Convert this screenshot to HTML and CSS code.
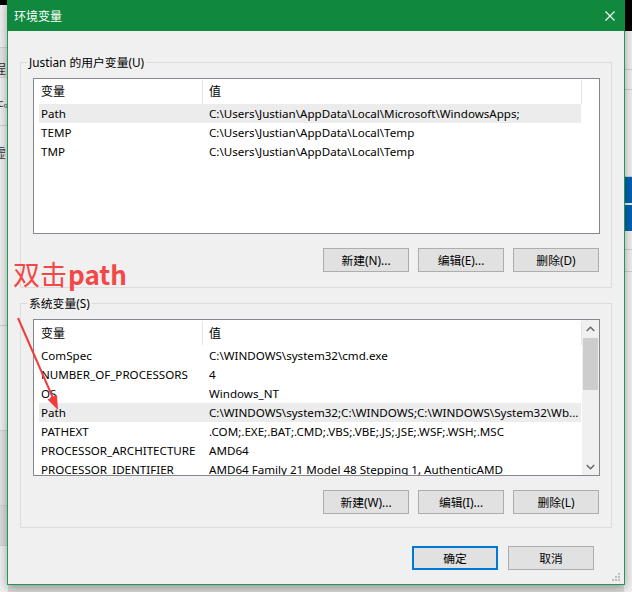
FILE: index.html
```html
<!DOCTYPE html>
<html lang="zh-CN">
<head>
<meta charset="utf-8">
<title>环境变量</title>
<link rel="stylesheet" href="styles.css">
</head>
<body>
<div class="bg-left">
  <div class="bl-top"></div>
  <div class="bl-row bl-r1"></div>
  <div class="bl-row bl-r2"><span class="frag f1">程</span></div>
  <div class="bl-row bl-r3"><span class="frag f2">c。</span></div>
  <div class="bl-row bl-r4"><span class="frag f3">虚</span></div>
  <div class="bl-row bl-r5"></div>
  <div class="bl-row bl-r6"></div>
  <div class="bl-row bl-r7"></div>
</div>
<div class="bg-right">
  <div class="br-top"></div>
  <div class="br-row br-r1"></div>
  <div class="br-row br-r2"></div>
  <div class="br-row br-r3"></div>
  <div class="br-blue"></div>
  <div class="br-blue second"></div>
  <div class="br-row br-r4"></div>
  <div class="br-row br-r5"></div>
</div>

<div class="dialog">
  <div class="titlebar">
    <span class="title">环境变量</span>
    <svg class="close" width="10" height="10" viewBox="0 0 10 10"><path d="M0.5 0.5 L9.5 9.5 M9.5 0.5 L0.5 9.5" stroke="#fff" stroke-width="1.1" fill="none"/></svg>
  </div>
  <div class="content">
    <fieldset class="group">
      <legend>Justian 的用户变量(U)</legend>
      <div class="listbox">
        <div class="list-main">
          <div class="lv-header"><div class="hc hc1">变量</div><div class="hc hc2">值</div></div>
          <div class="lv-row sel"><div class="c1">Path</div><div class="c2">C:\Users\Justian\AppData\Local\Microsoft\WindowsApps;</div></div>
          <div class="lv-row"><div class="c1">TEMP</div><div class="c2">C:\Users\Justian\AppData\Local\Temp</div></div>
          <div class="lv-row"><div class="c1">TMP</div><div class="c2">C:\Users\Justian\AppData\Local\Temp</div></div>
        </div>
      </div>
      <div class="btn-row">
        <button class="btn">新建(N)...</button>
        <button class="btn">编辑(E)...</button>
        <button class="btn">删除(D)</button>
      </div>
    </fieldset>

    <fieldset class="group sys">
      <legend>系统变量(S)</legend>
      <div class="listbox tall">
        <div class="list-main">
          <div class="lv-header"><div class="hc hc1">变量</div><div class="hc hc2">值</div></div>
          <div class="lv-row"><div class="c1">ComSpec</div><div class="c2">C:\WINDOWS\system32\cmd.exe</div></div>
          <div class="lv-row"><div class="c1">NUMBER_OF_PROCESSORS</div><div class="c2">4</div></div>
          <div class="lv-row"><div class="c1">OS</div><div class="c2">Windows_NT</div></div>
          <div class="lv-row sel"><div class="c1">Path</div><div class="c2">C:\WINDOWS\system32;C:\WINDOWS;C:\WINDOWS\System32\Wb...</div></div>
          <div class="lv-row"><div class="c1">PATHEXT</div><div class="c2">.COM;.EXE;.BAT;.CMD;.VBS;.VBE;.JS;.JSE;.WSF;.WSH;.MSC</div></div>
          <div class="lv-row"><div class="c1">PROCESSOR_ARCHITECTURE</div><div class="c2">AMD64</div></div>
          <div class="lv-row"><div class="c1">PROCESSOR_IDENTIFIER</div><div class="c2">AMD64 Family 21 Model 48 Stepping 1, AuthenticAMD</div></div>
        </div>
        <div class="scrollbar">
          <div class="sb-btn"><svg width="9" height="6" viewBox="0 0 9 6"><path d="M0.7 5 L4.5 1.2 L8.3 5" stroke="#606060" stroke-width="1.3" fill="none"/></svg></div>
          <div class="sb-track"><div class="sb-thumb"></div></div>
          <div class="sb-btn"><svg width="9" height="6" viewBox="0 0 9 6"><path d="M0.7 1 L4.5 4.8 L8.3 1" stroke="#606060" stroke-width="1.3" fill="none"/></svg></div>
        </div>
      </div>
      <div class="btn-row">
        <button class="btn">新建(W)...</button>
        <button class="btn">编辑(I)...</button>
        <button class="btn">删除(L)</button>
      </div>
    </fieldset>

    <div class="dlg-buttons">
      <button class="btn default">确定</button>
      <button class="btn">取消</button>
    </div>
  </div>
  <svg class="grip" width="9" height="9" viewBox="0 0 9 9">
    <rect x="6" y="0" width="2" height="2" fill="#bdbdbd"/>
    <rect x="3" y="3" width="2" height="2" fill="#bdbdbd"/>
    <rect x="6" y="3" width="2" height="2" fill="#bdbdbd"/>
    <rect x="0" y="6" width="2" height="2" fill="#bdbdbd"/>
    <rect x="3" y="6" width="2" height="2" fill="#bdbdbd"/>
    <rect x="6" y="6" width="2" height="2" fill="#bdbdbd"/>
  </svg>
</div>

<div class="annot">双击<span class="annot-en">path</span></div>
<svg class="arrow" width="632" height="592" viewBox="0 0 632 592">
  <line x1="18" y1="318" x2="53" y2="398" stroke="#f03c3c" stroke-width="2"/>
  <polygon points="58,410 47.5,399.5 57,395" fill="#f03c3c"/>
</svg>
</body>
</html>
```

FILE: styles.css
```css
* { box-sizing: border-box; }
html, body { margin: 0; padding: 0; }
body {
  width: 632px;
  height: 592px;
  position: relative;
  overflow: hidden;
  background: #d9d9d9;
  font-family: "Noto Sans", "Noto Sans CJK SC", sans-serif;
  font-size: 12px;
  color: #000;
}

/* background windows */
.bg-left {
  position: absolute;
  left: 0; top: 0;
  width: 8px; height: 592px;
  background: #f0f0f0;
  display: flex;
  flex-direction: column;
  overflow: hidden;
}
.bl-top { height: 5px; background: #000; }
.bl-row { border-bottom: 1px solid #d2d2d2; position: relative; overflow: hidden; }
.bl-r1 { height: 43px; background: #f0f0f0; }
.bl-r2 { height: 30px; background: #e6e6e6; }
.bl-r3 { height: 48px; }
.bl-r4 { height: 200px; }
.bl-r5 { height: 105px; }
.bl-r6 { height: 75px; background: #e2e2e2; }
.bl-r7 { height: 40px; background: #dcdcdc; }
.frag {
  display: block;
  margin-left: -7px;
  font-family: "Noto Sans CJK SC", sans-serif;
  font-size: 13px;
  line-height: 16px;
  color: #333;
}
.frag.f1 { margin-top: 12px; }
.frag.f2 { margin-top: 16px; margin-left: -2px; font-size: 11px; }
.frag.f3 { margin-top: 18px; }

.bg-right {
  position: absolute;
  left: 624px; top: 0;
  width: 8px; height: 592px;
  background: #f0f0f0;
  display: flex;
  flex-direction: column;
}
.br-top { height: 31px; background: #000; }
.br-row { border-bottom: 1px solid #d0d0d0; }
.br-r1 { height: 39px; }
.br-r2 { height: 20px; }
.br-r3 { height: 87px; }
.br-blue { height: 26px; background: #0063b1; }
.br-blue.second { margin-top: 2px; }
.br-r4 { height: 19px; }
.br-r5 { height: 22px; }

/* dialog window */
.dialog {
  position: absolute;
  left: 7px; top: 0;
  width: 618px;
  height: 585px;
  background: #f0f0f0;
  border: 1px solid #1d9a4f;
  border-top: none;
  box-shadow: 0 2px 10px rgba(0, 0, 0, 0.35);
  display: flex;
  flex-direction: column;
}
.titlebar {
  height: 31px;
  margin: 0 -1px;
  background: #10893e;
  color: #fff;
  display: flex;
  align-items: center;
  justify-content: space-between;
  padding: 0 10px 0 7px;
  flex: none;
}
.title {
  font-family: "Noto Sans CJK SC", sans-serif;
  font-size: 12px;
  line-height: 16px;
}
.close { display: block; }

.content {
  flex: 1;
  display: flex;
  flex-direction: column;
}

.group {
  margin: 23px 12px 0 12px;
  padding: 0 12px 15px 12px;
  border: 1px solid #dcdcdc;
  min-width: 0;
}
.group.sys { margin-top: 7px; padding-bottom: 13px; }
.group legend {
  padding: 0 2px;
  margin-left: -6px;
  line-height: 16px;
  font-size: 11.8px;
}

.listbox {
  margin-top: 8px;
  margin-right: -1px;
  height: 156px;
  border: 1px solid #828790;
  background: #fff;
  display: flex;
  overflow: hidden;
}
.listbox.tall { height: 157px; }
.list-main { flex: 1; min-width: 0; }

.lv-header {
  height: 25px;
  display: flex;
}
.tall .lv-header { height: 26px; }
.hc {
  height: 24px;
  margin-top: 1px;
  line-height: 23px;
  border-right: 1px solid #e5e5e5;
  flex: none;
}
.tall .hc { line-height: 25px; }
.hc1 { width: 169px; padding-left: 7px; }
.hc2 { width: 379px; padding-left: 6px; }

.lv-row {
  margin-left: 5px;
  width: 542px;
  height: 19px;
  line-height: 19px;
  display: flex;
  white-space: nowrap;
  font-size: 11.6px;
}
.lv-row.sel { background: #ececec; }
.c1 { width: 164px; padding-left: 2px; flex: none; }
.c2 { padding-left: 6px; flex: none; }

.scrollbar {
  width: 17px;
  flex: none;
  background: #f0f0f0;
  display: flex;
  flex-direction: column;
}
.sb-btn {
  height: 17px;
  display: flex;
  align-items: center;
  justify-content: center;
  flex: none;
}
.sb-track { flex: 1; }
.sb-thumb { height: 52px; margin: 1px 1px 0 1px; background: #cdcdcd; }

.btn-row {
  margin-top: 14px;
  display: flex;
  justify-content: flex-end;
  gap: 9px;
}
.btn {
  width: 86px;
  height: 24px;
  padding: 0;
  background: #e1e1e1;
  border: 1px solid #adadad;
  font-family: "Noto Sans", "Noto Sans CJK SC", sans-serif;
  font-size: 11.8px;
  color: #000;
  line-height: 20px;
}
.btn.default { border: 2px solid #0078d7; }

.dlg-buttons {
  margin: 18px 30px 0 0;
  display: flex;
  justify-content: flex-end;
  gap: 10px;
}

.grip {
  position: absolute;
  right: 3px;
  bottom: 2px;
}

/* annotation overlay */
.annot {
  position: absolute;
  left: 13px;
  top: 256px;
  font-family: "Noto Sans CJK SC", sans-serif;
  font-size: 27px;
  line-height: 36px;
  color: #f24848;
}
.annot-en { font-weight: 700; font-size: 26px; margin-left: 1px; }
.arrow {
  position: absolute;
  left: 0; top: 0;
  pointer-events: none;
}
```
